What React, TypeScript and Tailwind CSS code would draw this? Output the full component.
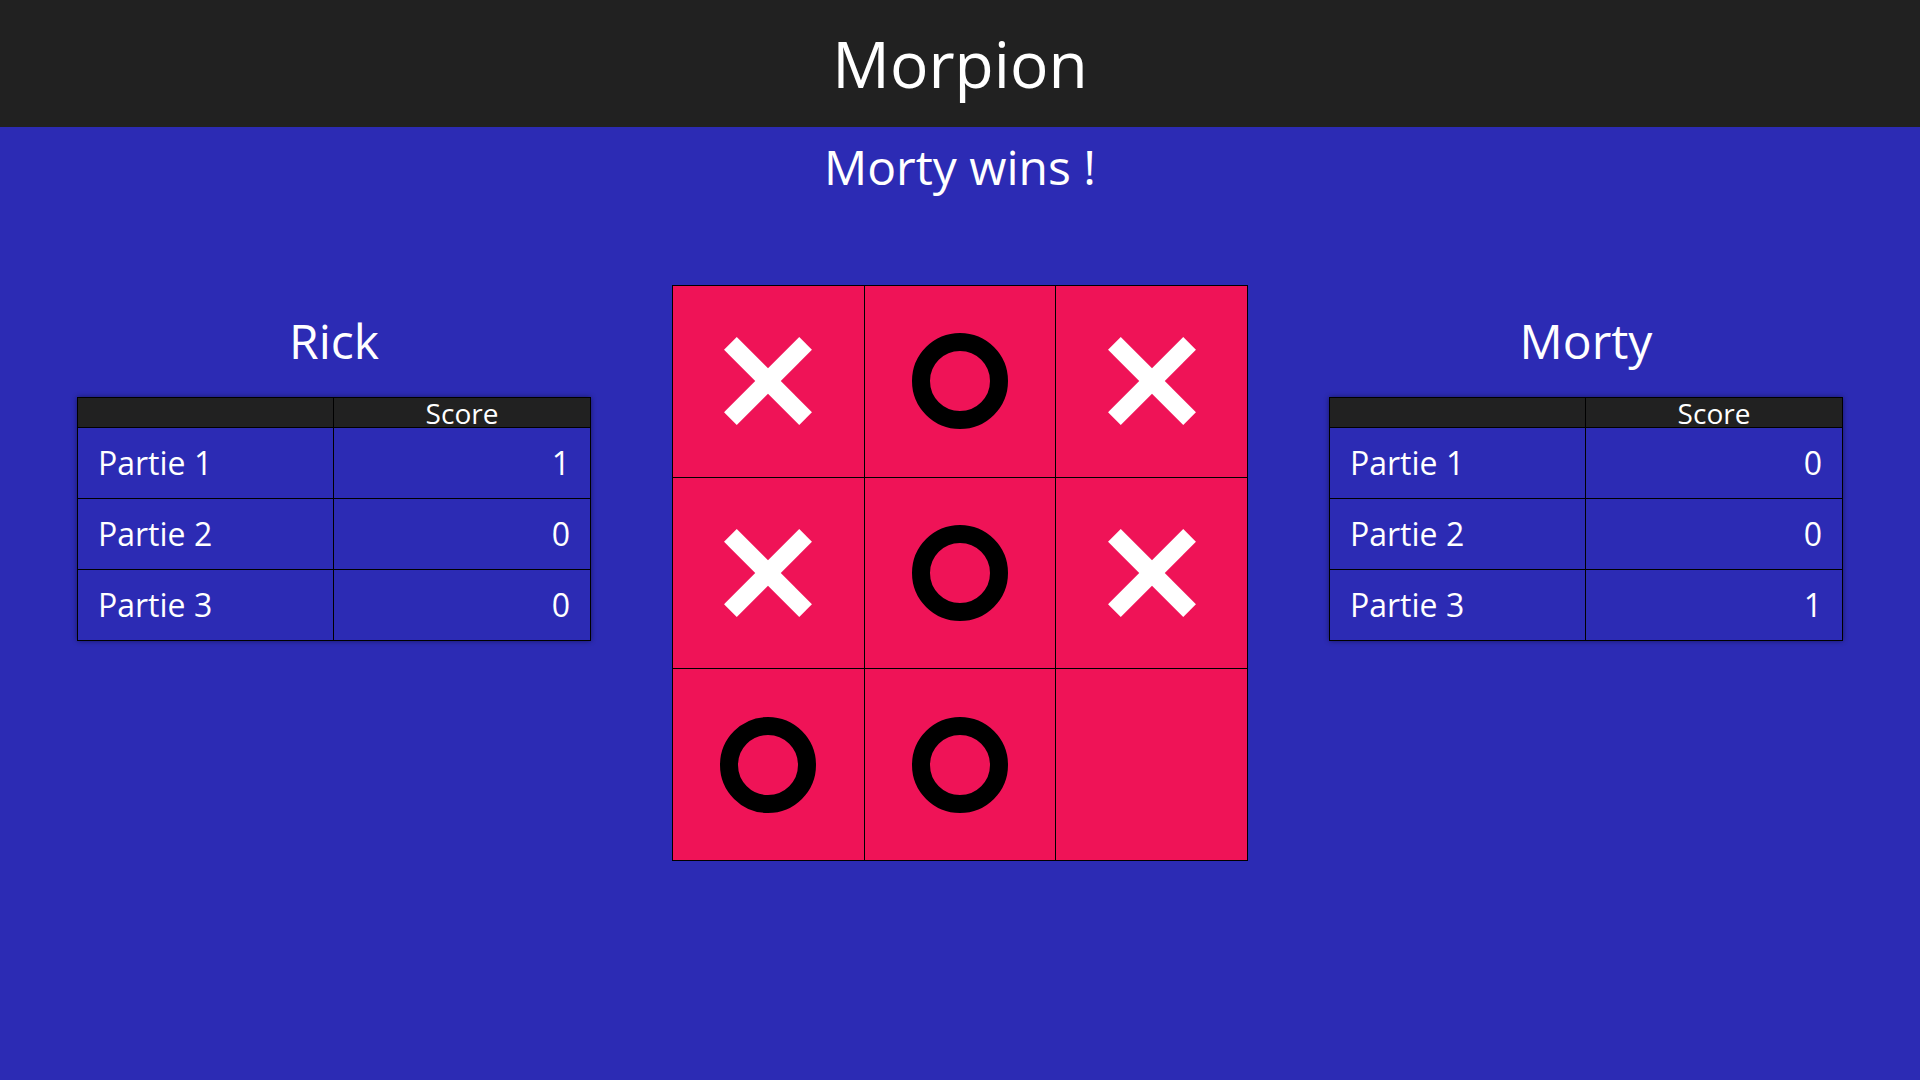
type Mark = "X" | "O" | null;

const board: Mark[] = ["X", "O", "X", "X", "O", "X", "O", "O", null];

function Cross() {
  return (
    <svg width="88" height="88" viewBox="0 0 88 88">
      <line x1="6.4" y1="6.4" x2="81.6" y2="81.6" stroke="#fff" strokeWidth="18" />
      <line x1="81.6" y1="6.4" x2="6.4" y2="81.6" stroke="#fff" strokeWidth="18" />
    </svg>
  );
}

function Circle() {
  return (
    <svg width="96" height="96" viewBox="0 0 96 96">
      <circle cx="48" cy="48" r="39" fill="none" stroke="#000" strokeWidth="18" />
    </svg>
  );
}

function ScoreTable({ name, scores }: { name: string; scores: number[] }) {
  return (
    <div className="w-[514px]">
      <h2 className="h-[112px] flex items-center justify-center text-[48px] leading-none font-normal">
        {name}
      </h2>
      <div className="border border-black shadow-[0_0_5px_rgba(0,0,0,0.45)]">
        <div className="grid grid-cols-2 h-[29px] bg-[#212121]">
          <div className="border-r border-black" />
          <div className="flex items-center justify-center text-[28px] leading-none">Score</div>
        </div>
        {scores.map((s, i) => (
          <div key={i} className="grid grid-cols-2 h-[71px] border-t border-black">
            <div className="flex items-center px-5 border-r border-black text-[32px] leading-none">
              Partie {i + 1}
            </div>
            <div className="flex items-center justify-end px-5 text-[32px] leading-none">{s}</div>
          </div>
        ))}
      </div>
    </div>
  );
}

export default function App() {
  return (
    <div className="min-h-screen bg-[#2c2bb4] text-white font-['Open_Sans','Noto_Sans',sans-serif]">
      <header className="h-[127px] bg-[#212121] flex items-center justify-center">
        <h1 className="text-[64px] leading-none font-normal">Morpion</h1>
      </header>
      <div className="h-[80px] flex items-center justify-center text-[48px] leading-none">Morty wins !</div>

      <main className="mt-[78px] px-[77px] flex justify-between items-start">
        <ScoreTable name="Rick" scores={[1, 0, 0]} />

        <div className="w-[576px] h-[576px] grid grid-cols-3 grid-rows-3 gap-px p-px bg-black">
          {board.map((m, i) => (
            <div key={i} className="bg-[#ef1357] flex items-center justify-center">
              {m === "X" && <Cross />}
              {m === "O" && <Circle />}
            </div>
          ))}
        </div>

        <ScoreTable name="Morty" scores={[0, 0, 1]} />
      </main>
    </div>
  );
}
